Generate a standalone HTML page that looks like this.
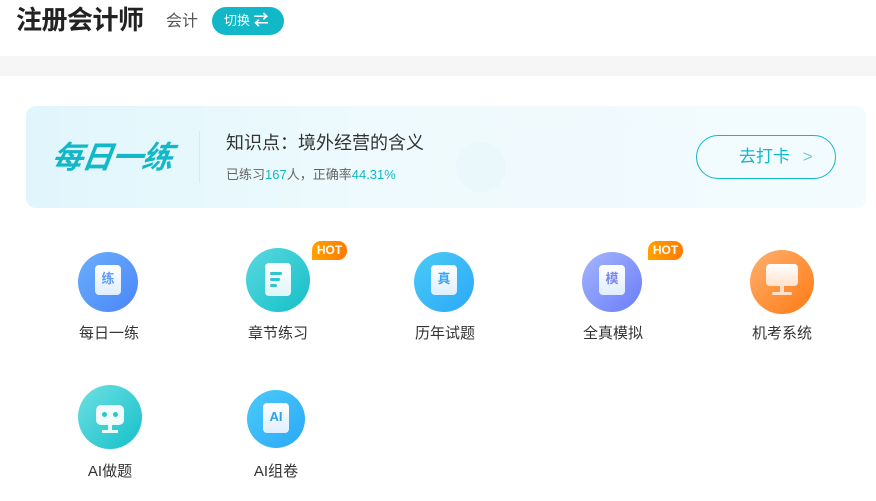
<!DOCTYPE html>
<html><head><meta charset="utf-8"><style>
*{margin:0;padding:0;box-sizing:border-box}
body{width:876px;height:501px;overflow:hidden;background:#fff;font-family:"Liberation Sans","Noto Sans CJK SC",sans-serif;position:relative;color:#333}
.a{position:absolute}
.c{position:absolute;border-radius:50%}
.lbl{position:absolute;font-size:15px;color:#333;width:120px;text-align:center;line-height:20px}
.hot{position:absolute;width:35px;height:19px;background:linear-gradient(90deg,#ffa200,#ff7a00);color:#fff;font-size:12px;font-weight:bold;line-height:19px;text-align:center;border-radius:9px 9px 9px 0}
.doc{position:absolute;background:linear-gradient(180deg,#fff,#dfeefe);border-radius:4px}
</style></head><body>
<div class="a" style="left:16px;top:4px;font-size:26px;font-weight:bold;color:#222;line-height:32px;letter-spacing:-0.5px">注册会计师</div>
<div class="a" style="left:166px;top:11px;font-size:16px;color:#555;line-height:22px">会计</div>
<div class="a" style="left:212px;top:7px;width:72px;height:28px;border-radius:14px;background:#12b8c8;color:#fff;font-size:13px;line-height:28px;padding-left:12px">切换 <span style="font-size:15px;font-weight:bold">⇄</span></div>
<div class="a" style="left:0;top:56px;width:876px;height:20px;background:#f6f6f6"></div>

<div class="a" style="left:26px;top:106px;width:840px;height:102px;border-radius:10px;background:linear-gradient(90deg,#e0f6fc,#eefafd 40%,#f3fbfe)"></div>
<div class="c" style="left:456px;top:142px;width:50px;height:50px;background:#eaf7fb"></div>
<div class="a" style="left:52px;top:139px;font-size:31px;font-weight:bold;font-style:italic;color:#12b8c8;line-height:38px;transform:skewX(-8deg);letter-spacing:-1px">每日一练</div>
<div class="a" style="left:199px;top:131px;width:1px;height:52px;background:#cdeef4"></div>
<div class="a" style="left:226px;top:131px;font-size:18px;color:#333;line-height:24px">知识点：境外经营的含义</div>
<div class="a" style="left:226px;top:166px;font-size:13px;color:#666;line-height:18px">已练习<span style="color:#12b8c8">167</span>人，正确率<span style="color:#12b8c8">44.31%</span></div>
<div class="a" style="left:696px;top:135px;width:140px;height:44px;border:1px solid #12b8c8;border-radius:22px;color:#12b8c8;font-size:17px;line-height:42px;padding-left:42px">去打卡 <span style="margin-left:8px;color:#7cc">&gt;</span></div>

<!-- row 1 -->
<div class="c" style="left:78px;top:252px;width:60px;height:60px;background:linear-gradient(135deg,#6aaefc,#4a86f8)"></div>
<div class="doc" style="left:95px;top:265px;width:26px;height:30px;color:#5c9af8;font-size:13px;font-weight:bold;text-align:center;line-height:28px">练</div>
<div class="lbl" style="left:49px;top:324px">每日一练</div>

<div class="c" style="left:246px;top:248px;width:64px;height:64px;background:linear-gradient(135deg,#5ad8e0,#14c0c8)"></div>
<div class="doc" style="left:265px;top:263px;width:26px;height:33px;background:linear-gradient(180deg,#fff,#dff6f8)"></div>
<div class="a" style="left:270px;top:272px;width:12px;height:3px;background:#2cc6cc;border-radius:2px"></div>
<div class="a" style="left:270px;top:278px;width:10px;height:3px;background:#2cc6cc;border-radius:2px"></div>
<div class="a" style="left:270px;top:284px;width:7px;height:3px;background:#2cc6cc;border-radius:2px"></div>
<div class="hot" style="left:312px;top:241px">HOT</div>
<div class="lbl" style="left:218px;top:324px">章节练习</div>

<div class="c" style="left:414px;top:252px;width:60px;height:60px;background:linear-gradient(135deg,#4ccbf8,#2aa8f8)"></div>
<div class="doc" style="left:431px;top:265px;width:26px;height:30px;color:#3aa6ee;font-size:13px;font-weight:bold;text-align:center;line-height:28px">真</div>
<div class="lbl" style="left:385px;top:324px">历年试题</div>

<div class="c" style="left:582px;top:252px;width:60px;height:60px;background:linear-gradient(135deg,#a4b6fc,#6b7cf8)"></div>
<div class="doc" style="left:599px;top:265px;width:26px;height:30px;color:#7a88ee;font-size:13px;font-weight:bold;text-align:center;line-height:28px">模</div>
<div class="hot" style="left:648px;top:241px">HOT</div>
<div class="lbl" style="left:553px;top:324px">全真模拟</div>

<div class="c" style="left:750px;top:250px;width:64px;height:64px;background:linear-gradient(135deg,#ffb070,#ff7a12)"></div>
<div class="a" style="left:766px;top:264px;width:32px;height:22px;border-radius:4px;background:linear-gradient(180deg,#fff,#ffe3cc)"></div>
<div class="a" style="left:780px;top:286px;width:4px;height:6px;background:#ffe0c8"></div>
<div class="a" style="left:772px;top:292px;width:20px;height:3px;border-radius:2px;background:#ffe0c8"></div>
<div class="lbl" style="left:722px;top:324px">机考系统</div>

<!-- row 2 -->
<div class="c" style="left:78px;top:385px;width:64px;height:64px;background:linear-gradient(135deg,#6ee0e4,#14c0c8)"></div>
<div class="a" style="left:96px;top:405px;width:28px;height:20px;border-radius:5px;background:#f2fbfc"></div>
<div class="c" style="left:102px;top:412px;width:5px;height:5px;background:#2cc6cc"></div>
<div class="c" style="left:113px;top:412px;width:5px;height:5px;background:#2cc6cc"></div>
<div class="a" style="left:108px;top:425px;width:4px;height:5px;background:#eafafb"></div>
<div class="a" style="left:102px;top:430px;width:16px;height:3px;background:#eafafb"></div>
<div class="lbl" style="left:50px;top:462px">AI做题</div>

<div class="c" style="left:247px;top:390px;width:58px;height:58px;background:linear-gradient(135deg,#4ccbf8,#2aa8f8)"></div>
<div class="doc" style="left:263px;top:403px;width:26px;height:30px;color:#2aa0ee;font-size:13px;font-weight:bold;text-align:center;line-height:28px">AI</div>
<div class="lbl" style="left:216px;top:462px">AI组卷</div>
</body></html>
